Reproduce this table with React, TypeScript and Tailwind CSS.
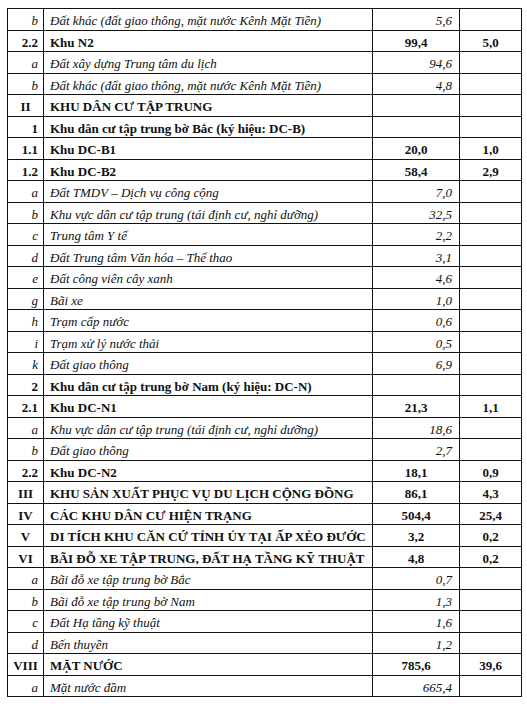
type Row = {
  no: string;
  name: string;
  area?: string;
  pct?: string;
  kind: "sub" | "bold";
  roman?: boolean;
};

const rows: Row[] = [
  { no: "b", name: "Đất khác (đất giao thông, mặt nước Kênh Mặt Tiền)", area: "5,6", kind: "sub" },
  { no: "2.2", name: "Khu N2", area: "99,4", pct: "5,0", kind: "bold" },
  { no: "a", name: "Đất xây dựng Trung tâm du lịch", area: "94,6", kind: "sub" },
  { no: "b", name: "Đất khác (đất giao thông, mặt nước Kênh Mặt Tiền)", area: "4,8", kind: "sub" },
  { no: "II", name: "KHU DÂN CƯ TẬP TRUNG", kind: "bold", roman: true },
  { no: "1", name: "Khu dân cư tập trung bờ Bắc (ký hiệu: DC-B)", kind: "bold" },
  { no: "1.1", name: "Khu DC-B1", area: "20,0", pct: "1,0", kind: "bold" },
  { no: "1.2", name: "Khu DC-B2", area: "58,4", pct: "2,9", kind: "bold" },
  { no: "a", name: "Đất TMDV – Dịch vụ công cộng", area: "7,0", kind: "sub" },
  { no: "b", name: "Khu vực dân cư tập trung (tái định cư, nghỉ dưỡng)", area: "32,5", kind: "sub" },
  { no: "c", name: "Trung tâm Y tế", area: "2,2", kind: "sub" },
  { no: "d", name: "Đất Trung tâm Văn hóa – Thể thao", area: "3,1", kind: "sub" },
  { no: "e", name: "Đất công viên cây xanh", area: "4,6", kind: "sub" },
  { no: "g", name: "Bãi xe", area: "1,0", kind: "sub" },
  { no: "h", name: "Trạm cấp nước", area: "0,6", kind: "sub" },
  { no: "i", name: "Trạm xử lý nước thải", area: "0,5", kind: "sub" },
  { no: "k", name: "Đất giao thông", area: "6,9", kind: "sub" },
  { no: "2", name: "Khu dân cư tập trung bờ Nam (ký hiệu: DC-N)", kind: "bold" },
  { no: "2.1", name: "Khu DC-N1", area: "21,3", pct: "1,1", kind: "bold" },
  { no: "a", name: "Khu vực dân cư tập trung (tái định cư, nghỉ dưỡng)", area: "18,6", kind: "sub" },
  { no: "b", name: "Đất giao thông", area: "2,7", kind: "sub" },
  { no: "2.2", name: "Khu DC-N2", area: "18,1", pct: "0,9", kind: "bold" },
  { no: "III", name: "KHU SẢN XUẤT PHỤC VỤ DU LỊCH CỘNG ĐỒNG", area: "86,1", pct: "4,3", kind: "bold", roman: true },
  { no: "IV", name: "CÁC KHU DÂN CƯ HIỆN TRẠNG", area: "504,4", pct: "25,4", kind: "bold", roman: true },
  { no: "V", name: "DI TÍCH KHU CĂN CỨ TỈNH ỦY TẠI ẤP XẺO ĐƯỚC", area: "3,2", pct: "0,2", kind: "bold", roman: true },
  { no: "VI", name: "BÃI ĐỖ XE TẬP TRUNG, ĐẤT HẠ TẦNG KỸ THUẬT", area: "4,8", pct: "0,2", kind: "bold", roman: true },
  { no: "a", name: "Bãi đỗ xe tập trung bờ Bắc", area: "0,7", kind: "sub" },
  { no: "b", name: "Bãi đỗ xe tập trung bờ Nam", area: "1,3", kind: "sub" },
  { no: "c", name: "Đất Hạ tầng kỹ thuật", area: "1,6", kind: "sub" },
  { no: "d", name: "Bến thuyền", area: "1,2", kind: "sub" },
  { no: "VIII", name: "MẶT NƯỚC", area: "785,6", pct: "39,6", kind: "bold", roman: true },
  { no: "a", name: "Mặt nước đầm", area: "665,4", kind: "sub" },
];

export default function App() {
  return (
    <div className="w-[527px] h-[704px] bg-white pt-[8px] pl-[7px] font-['Liberation_Serif','Times_New_Roman',serif]">
      <table className="w-[514px] table-fixed border-collapse text-[13px] leading-none text-[#111] whitespace-nowrap">
        <colgroup>
          <col className="w-[36px]" />
          <col className="w-[329px]" />
          <col className="w-[87px]" />
          <col className="w-[62px]" />
        </colgroup>
        <tbody>
          {rows.map((r, i) => {
            const bold = r.kind === "bold";
            return (
              <tr key={i} className="h-[21.5px]">
                <td
                  className={`border border-[#111] px-[5px] pt-[3px] ${
                    r.roman ? "text-center" : "text-right"
                  } ${bold ? "font-bold" : "italic"}`}
                >
                  {r.no}
                </td>
                <td
                  className={`border border-[#111] px-[6px] pt-[3px] ${
                    bold ? "font-bold" : "italic"
                  }`}
                >
                  {r.name}
                </td>
                <td
                  className={`border border-[#111] pt-[3px] ${
                    bold ? "font-bold text-center" : "italic text-right pr-[7px]"
                  }`}
                >
                  {r.area}
                </td>
                <td className="border border-[#111] pt-[3px] font-bold text-center">
                  {r.pct}
                </td>
              </tr>
            );
          })}
        </tbody>
      </table>
    </div>
  );
}
